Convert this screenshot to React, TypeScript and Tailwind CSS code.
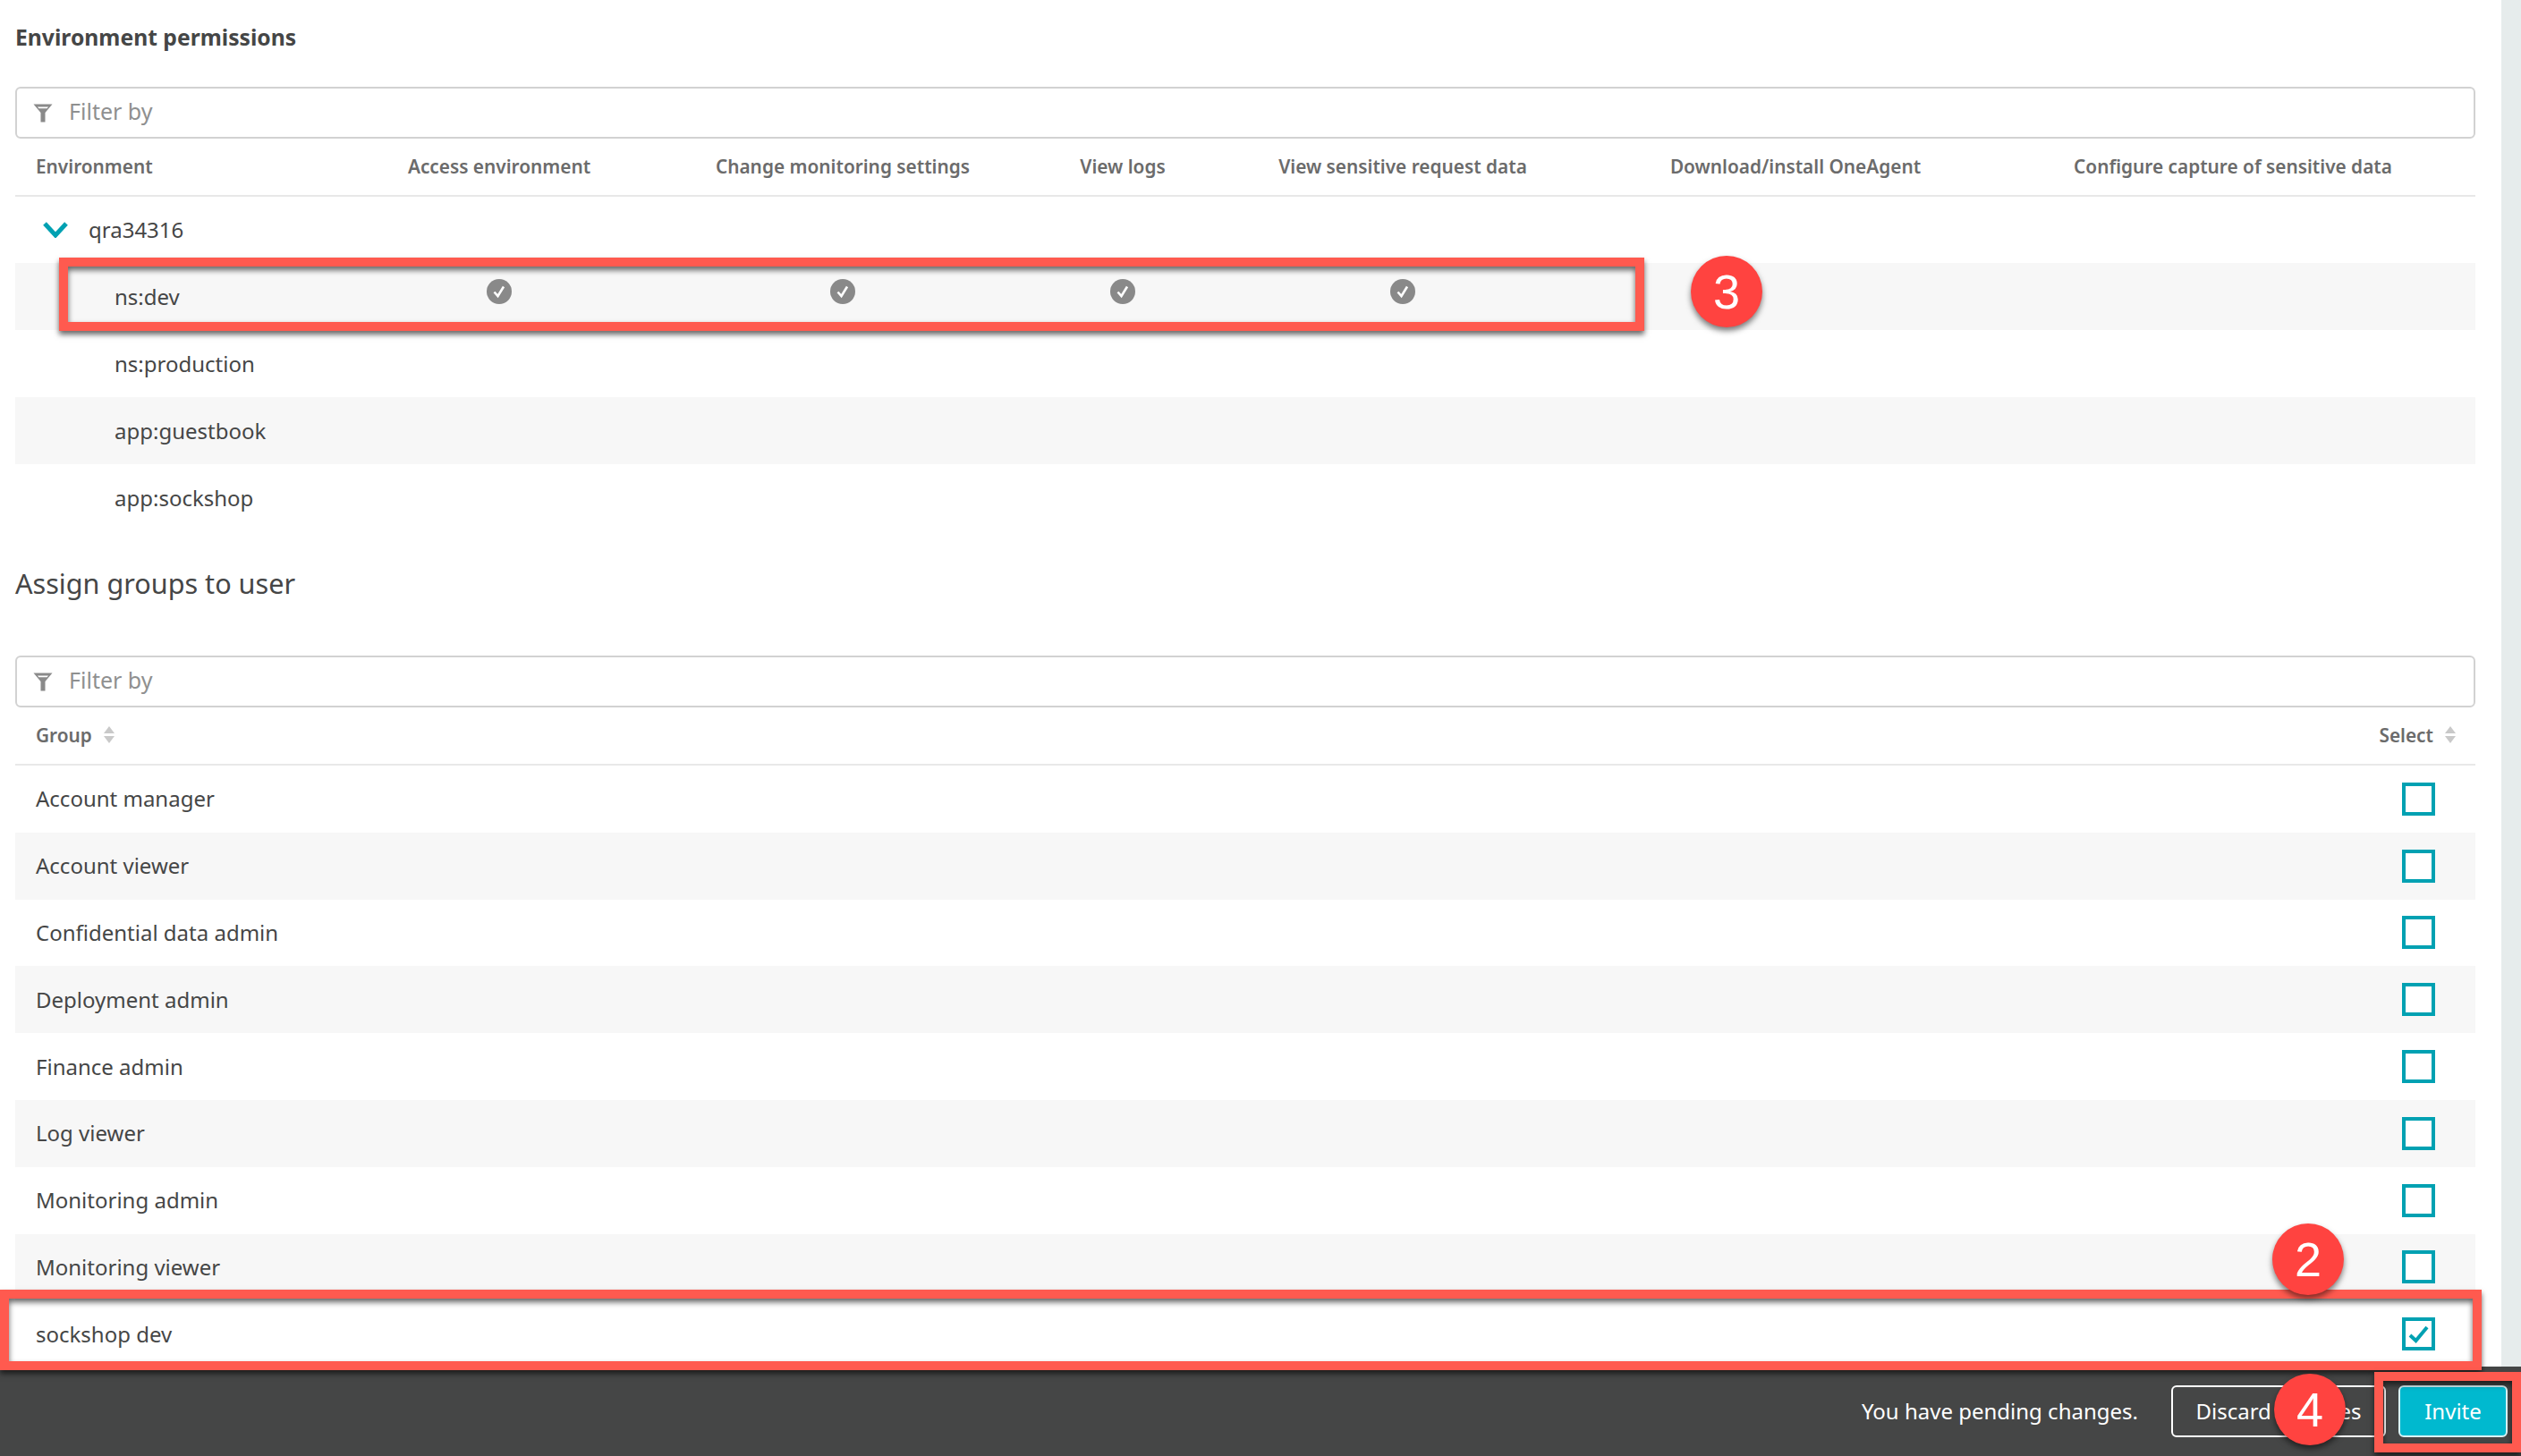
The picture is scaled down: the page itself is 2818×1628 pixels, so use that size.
import React from 'react';

const FONT = "font-['Noto_Sans',sans-serif]";

const ENV_ROWS = ['ns:dev', 'ns:production', 'app:guestbook', 'app:sockshop'];
const GROUPS = [
  'Account manager',
  'Account viewer',
  'Confidential data admin',
  'Deployment admin',
  'Finance admin',
  'Log viewer',
  'Monitoring admin',
  'Monitoring viewer',
  'sockshop dev',
];

const ENV_GRID = 'grid grid-cols-[413px_256px_512px_114px_512px_366px_1fr]';

const FilterBox = () => (
  <div className="h-[58px] border-2 border-[#d2d2d2] rounded-[6px] flex items-center pl-[18px] gap-[18px] bg-white">
    <svg width="22" height="21" viewBox="0 0 22 21" className="shrink-0">
      <path d="M0.5 0.5H21.5L13.5 10V20.5H8.5V10Z" fill="#8a8a8a" />
      <path d="M5 3.5H17L15.6 5.2H6.4Z" fill="#ffffff" />
    </svg>
    <span className="text-[25px] text-[#8f9090] mb-[2px]">Filter by</span>
  </div>
);

const SortArrows = () => (
  <svg width="12" height="19" viewBox="0 0 12 19" className="shrink-0 mb-[3px]">
    <path d="M6 0L12 8H0Z" fill="#c9c9c9" />
    <path d="M6 19L0 11H12Z" fill="#c9c9c9" />
  </svg>
);

const CheckDot = () => (
  <svg width="28" height="28" viewBox="0 0 28 28" className="mb-[11px]">
    <circle cx="14" cy="14" r="14" fill="#898989" />
    <path d="M8.5 14.5L12.5 19L19 8.5" fill="none" stroke="#ffffff" strokeWidth="2.6" />
  </svg>
);

const Checkbox = ({ checked }: { checked?: boolean }) => (
  <div className="w-[37px] h-[37px] border-[4px] border-[#00a1b2] flex items-center justify-center bg-white">
    {checked && (
      <svg width="24" height="20" viewBox="0 0 24 20">
        <path d="M2 11L8.5 17L21 2" fill="none" stroke="#00a1b2" strokeWidth="4" />
      </svg>
    )}
  </div>
);

const Badge = ({ n, className }: { n: string; className: string }) => (
  <div
    className={`absolute w-[80px] h-[80px] rounded-full bg-[#ff4340] text-white flex items-center justify-center text-[54px] font-['Liberation_Sans',sans-serif] shadow-[0_4px_6px_rgba(0,0,0,0.5)] ${className}`}
  >
    {n}
  </div>
);

const boxStyle =
  'absolute border-[10px] border-[#ff5a4f] shadow-[0_4px_6px_rgba(0,0,0,0.6),inset_0_4px_6px_rgba(0,0,0,0.6)]';

export default function App() {
  return (
    <div className={`relative w-[2818px] h-[1628px] overflow-hidden bg-white text-[#454646] ${FONT}`}>
      <div className="flex h-[1528px]">
        <div className="flex-1 pl-[17px] pr-[29px]">
          <h2 className="h-[97px] pt-[22px] text-[24.7px] leading-[40px] font-bold">Environment permissions</h2>
          <FilterBox />

          <div className={`${ENV_GRID} h-[65px] items-center border-b-2 border-[#e8e8e8] text-[20.8px] font-semibold text-[#6b6b6b] text-center`}>
            <div className="pl-[23px] text-left">Environment</div>
            <div>Access environment</div>
            <div>Change monitoring settings</div>
            <div>View logs</div>
            <div>View sensitive request data</div>
            <div>Download/install OneAgent</div>
            <div className="pl-[35px]">Configure capture of sensitive data</div>
          </div>

          <div className="h-[74px] flex items-center pl-[31px] gap-[23px] text-[24px]">
            <svg width="28" height="18" viewBox="0 0 28 18">
              <path d="M2 2L14 15L26 2" fill="none" stroke="#00a1b2" strokeWidth="5" />
            </svg>
            <span>qra34316</span>
          </div>

          {ENV_ROWS.map((row, idx) => (
            <div key={row} className={`${ENV_GRID} h-[75px] items-center text-[24px] ${idx % 2 === 0 ? 'bg-[#f7f7f7]' : ''}`}>
              <div className="pl-[111px]">{row}</div>
              {idx === 0 &&
                [0, 1, 2, 3].map((c) => (
                  <div key={c} className="flex justify-center">
                    <CheckDot />
                  </div>
                ))}
            </div>
          ))}

          <h2 className="h-[139px] pt-[35px] text-[30.6px] leading-[46px]">Assign groups to user</h2>
          <FilterBox />

          <div className="h-[65px] flex items-center justify-between border-b-2 border-[#e8e8e8] pl-[23px] pr-[22px] text-[20.8px] font-semibold text-[#6b6b6b]">
            <div className="flex items-center gap-[13px]">
              <span>Group</span>
              <SortArrows />
            </div>
            <div className="flex items-center gap-[13px]">
              <span>Select</span>
              <SortArrows />
            </div>
          </div>

          {GROUPS.map((group, idx) => (
            <div
              key={group}
              className={`h-[74.8px] flex items-center justify-between pl-[23px] pr-[45px] text-[24px] ${idx % 2 === 1 ? 'bg-[#f7f7f7]' : ''}`}
            >
              <span>{group}</span>
              <Checkbox checked={group === 'sockshop dev'} />
            </div>
          ))}
        </div>
        <div className="w-[22px] bg-[#e6ecec]" />
      </div>

      <div className="h-[100px] bg-[#454646] flex items-center justify-end pr-[15px] text-white text-[24px]">
        <span className="mr-[37px]">You have pending changes.</span>
        <div className="w-[240px] h-[58px] border-2 border-white rounded-[6px] flex items-center justify-center mr-[14px]">
          Discard changes
        </div>
        <div className="w-[122px] h-[58px] bg-[#00b9cf] border-2 border-[#d8f3f6] rounded-[6px] flex items-center justify-center">
          Invite
        </div>
      </div>

      <div className={`${boxStyle} left-[66px] top-[288px] w-[1772px] h-[82px]`} />
      <div className={`${boxStyle} left-0 top-[1442px] w-[2774px] h-[90px]`} />
      <div className={`${boxStyle} left-[2654px] top-[1534px] w-[164px] h-[90px]`} />

      <Badge n="3" className="left-[1890px] top-[286px]" />
      <Badge n="2" className="left-[2540px] top-[1368px]" />
      <Badge n="4" className="left-[2542px] top-[1536px]" />
    </div>
  );
}
